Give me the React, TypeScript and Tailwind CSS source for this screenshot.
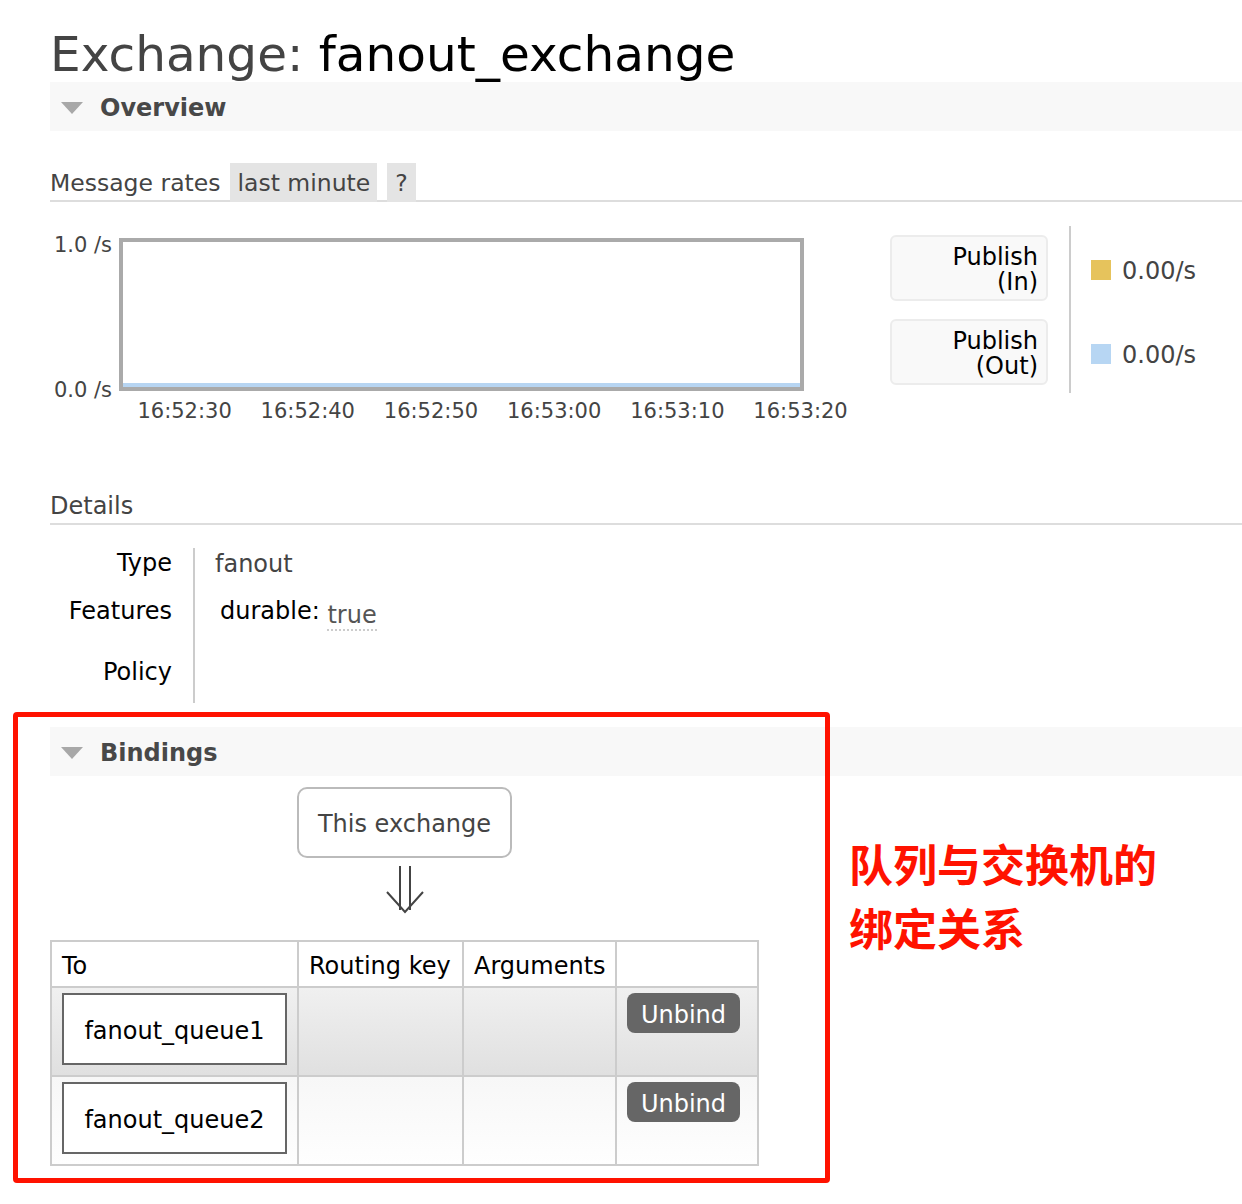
import React from "react";

const ticks = ["16:52:30", "16:52:40", "16:52:50", "16:53:00", "16:53:10", "16:53:20"];

function SectionBar({ title }: { title: string }) {
  return (
    <div className="flex h-[49px] items-start bg-[#f8f8f8] pl-[11px]">
      <svg width="22" height="12" viewBox="0 0 22 12" className="mt-[20px] shrink-0">
        <polygon points="0,0 22,0 11,12" fill="#a8a8a8" />
      </svg>
      <span className="ml-[17px] mt-[12px] font-bold text-[#484848]">{title}</span>
    </div>
  );
}

function LegendBox({ top, bottom }: { top: string; bottom: string }) {
  return (
    <div className="h-[66px] w-[158px] rounded-[6px] border-2 border-[#ececec] bg-[#f9f9f9] pr-[8px] pt-[8px] text-right leading-[25px] text-black">
      <div>{top}</div>
      <div>{bottom}</div>
    </div>
  );
}

function LegendValue({ color }: { color: string }) {
  return (
    <div className="flex h-[66px] items-center">
      <span className={`h-[20px] w-[20px] ${color}`} />
      <span className="ml-[11px] pt-[2px]">0.00/s</span>
    </div>
  );
}

const bindings = ["fanout_queue1", "fanout_queue2"];

export default function App() {
  return (
    <div className="relative h-[1204px] w-[1242px] overflow-hidden bg-white pl-[50px] pt-[27px] font-['DejaVu_Sans',sans-serif] text-[24px] leading-[28px] text-[#444]">
      <h1 className="whitespace-nowrap text-[48.5px] leading-[55px] text-[#444]">
        Exchange: <span className="text-black">fanout_exchange</span>
      </h1>

      <SectionBar title="Overview" />

      {/* message rates */}
      <div className="mt-[32px] flex h-[39px] items-start border-b-2 border-[#ddd] text-[23.5px] leading-[37px]">
        <span className="pt-[2px]">Message rates</span>
        <span className="ml-[10px] bg-[#e4e4e4] px-[7px] pt-[2px]">last minute</span>
        <span className="ml-[10px] bg-[#e4e4e4] px-[8px] pt-[2px]">?</span>
      </div>

      <div className="mt-[24px] flex items-start">
        <div className="flex h-[178px] w-[69px] shrink-0 flex-col justify-between pr-[7px] pt-[5px] text-right text-[21px] leading-[28px]">
          <span>1.0 /s</span>
          <span>0.0 /s</span>
        </div>
        <div className="w-[685px] shrink-0 pt-[12px]">
          <div className="flex h-[153px] w-[685px] flex-col justify-end border-4 border-[#aaa]">
            <div className="h-[4px] bg-[#b7d5f2]" />
          </div>
          <div className="ml-[4px] mt-[6px] flex text-[21px] leading-[28px]">
            {ticks.map((t) => (
              <span key={t} className="w-[123.2px] shrink-0 text-center">
                {t}
              </span>
            ))}
          </div>
        </div>
        <div className="ml-[86px] flex shrink-0">
          <div className="flex flex-col gap-[18px] pt-[9px]">
            <LegendBox top="Publish" bottom="(In)" />
            <LegendBox top="Publish" bottom="(Out)" />
          </div>
          <div className="ml-[21px] h-[167px] w-[2px] bg-[#ccc]" />
          <div className="ml-[20px] flex flex-col gap-[18px] pt-[11px]">
            <LegendValue color="bg-[#e6c35c]" />
            <LegendValue color="bg-[#b7d6f3]" />
          </div>
        </div>
      </div>

      {/* details */}
      <div className="mt-[61px] h-[39px] border-b-2 border-[#ddd] pt-[2px] leading-[37px]">Details</div>
      <div className="mt-[23px] grid w-fit grid-cols-[145px_auto]">
        <div className="h-[48px] border-r-2 border-[#ccc] pr-[21px] pt-[1px] text-right text-black">Type</div>
        <div className="pl-[20px] pt-[2px]">fanout</div>
        <div className="h-[62px] border-r-2 border-[#ccc] pr-[21px] pt-[1px] text-right text-black">Features</div>
        <div className="pl-[25px] pt-[1px] text-black">
          durable:{" "}
          <span className="relative top-[4px] border-b-2 border-dotted border-[#ccc] text-[#555]">true</span>
        </div>
        <div className="h-[45px] border-r-2 border-[#ccc] pr-[21px] text-right text-black">Policy</div>
        <div />
      </div>

      {/* bindings */}
      <div className="mt-[24px]">
        <SectionBar title="Bindings" />
      </div>
      <div className="flex w-[709px] flex-col items-center">
        <div className="mt-[11px] flex h-[71px] w-[215px] items-center justify-center rounded-[10px] border-2 border-[#bbb] pt-[3px]">
          This exchange
        </div>
        <svg width="38" height="48" viewBox="0 0 38 48" fill="none" stroke="#444" strokeWidth="2" className="mt-[8px]">
          <path d="M14 0 V44" />
          <path d="M24 0 V44" />
          <path d="M1 26 L19 46 L37 26" />
        </svg>
        <div className="mt-[26px] grid w-[709px] grid-cols-[247px_165px_153px_142px] border-l-2 border-t-2 border-[#ccc] text-black">
          {["To", "Routing key", "Arguments", ""].map((h, i) => (
            <div key={i} className="h-[46px] whitespace-nowrap border-b-2 border-r-2 border-[#ccc] bg-white pl-[10px] pt-[10px]">
              {h}
            </div>
          ))}
          {bindings.map((q, r) => {
            const bg =
              r === 0
                ? "bg-linear-to-b from-[#f0f0f0] to-[#e0e0e0]"
                : "bg-linear-to-b from-[#f7f7f7] to-[#fefefe]";
            return (
              <React.Fragment key={q}>
                <div className={`h-[89px] border-b-2 border-r-2 border-[#ccc] pl-[10px] pt-[5px] ${bg}`}>
                  <div className="flex h-[72px] w-[225px] items-center justify-center border-2 border-[#666] bg-white pt-[3px]">
                    {q}
                  </div>
                </div>
                <div className={`h-[89px] border-b-2 border-r-2 border-[#ccc] ${bg}`} />
                <div className={`h-[89px] border-b-2 border-r-2 border-[#ccc] ${bg}`} />
                <div className={`h-[89px] border-b-2 border-r-2 border-[#ccc] pl-[10px] pt-[5px] ${bg}`}>
                  <div className="flex h-[40px] w-[113px] items-center justify-center rounded-[8px] bg-[#666] pt-[3px] text-white">
                    Unbind
                  </div>
                </div>
              </React.Fragment>
            );
          })}
        </div>
      </div>

      {/* annotation */}
      <div className="pointer-events-none absolute left-[13px] top-[712px] h-[471px] w-[817px] rounded-[4px] border-[5px] border-[#ff1200]" />
      <div className="absolute left-[849px] top-[831px] font-['Noto_Sans_CJK_SC',sans-serif] text-[44px] font-bold leading-[64px] text-[#ff1200]">
        队列与交换机的
        <br />
        绑定关系
      </div>
    </div>
  );
}
